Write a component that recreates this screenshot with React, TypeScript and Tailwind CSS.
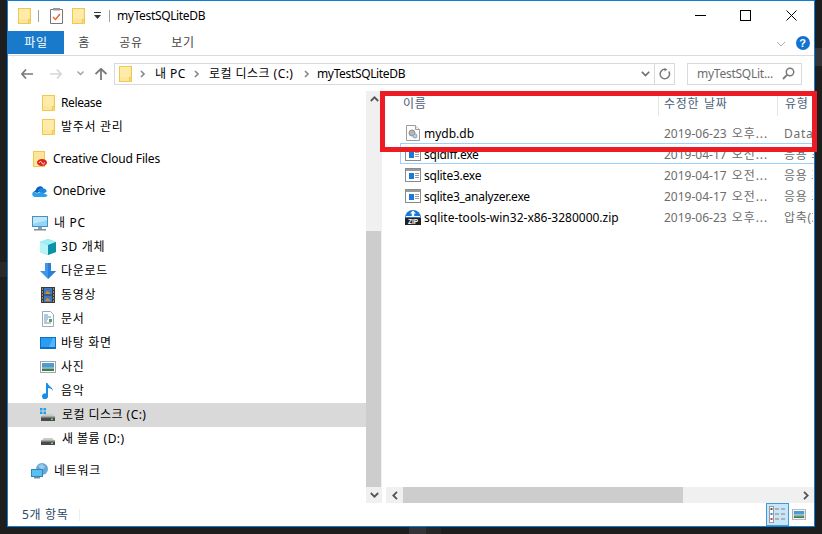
import React from "react";

const KR = "tracking-[0.7px]";
const KRP = "tracking-[0.45px]";

const Folder = ({ className = "" }: { className?: string }) => (
  <svg width="13" height="16" viewBox="0 0 13 16" className={`shrink-0 ${className}`}>
    <rect x="0.5" y="0.5" width="12" height="15" fill="#fde59a" stroke="#eec850" />
    <path d="M1 1h10v10H1z" fill="#ffeeb5" opacity="0.6" />
    <path d="M10.5 15.5v-4h2v4" fill="#fbdc7c" stroke="#eec850" />
  </svg>
);

const Chevron = ({ className = "" }: { className?: string }) => (
  <svg width="6" height="8" viewBox="0 0 6 8" className={`shrink-0 ${className}`}>
    <path d="M1 1l3 3-3 3" fill="none" stroke="#8a8a8a" strokeWidth="1.7" />
  </svg>
);

const ExeIcon = () => (
  <svg width="16" height="14" viewBox="0 0 16 14" className="shrink-0">
    <rect x="0.5" y="0.5" width="15" height="13" fill="#fff" stroke="#8b8b8b" />
    <rect x="1" y="1" width="14" height="2" fill="#9a9a9a" />
    <rect x="4" y="5" width="5" height="6" fill="#1979d8" />
    <path d="M10 5.5h4M10 7.5h4M10 9.5h4" stroke="#9a9a9a" />
  </svg>
);

const DbIcon = () => (
  <svg width="14" height="16" viewBox="0 0 14 16" className="shrink-0">
    <path d="M0.5 0.5h9l4 4v11h-13z" fill="#fdfdfd" stroke="#9c9c9c" />
    <path d="M9.5 0.5v4h4" fill="#eee" stroke="#9c9c9c" />
    <circle cx="6" cy="8" r="3" fill="#b5b5b5" stroke="#8d8d8d" />
    <circle cx="9" cy="11" r="2" fill="#b9d3ea" stroke="#8aa0b5" />
  </svg>
);

const ZipIcon = () => (
  <svg width="16" height="16" viewBox="0 0 16 16" className="shrink-0">
    <path d="M0 9a8 8 0 0 1 16 0z" fill="#1b78d0" />
    <path d="M8 1.5l3 3H9.2V7H6.8V4.5H5z" fill="#fff" />
    <path d="M1 7.5h14" stroke="#fff" />
    <rect x="0" y="9" width="16" height="7" fill="#222" />
    <text x="8" y="15" textAnchor="middle" fontSize="6.5" fontWeight="700" fill="#fff" fontFamily="Liberation Sans">ZIP</text>
  </svg>
);

const CloudFiles = () => (
  <svg width="14" height="16" viewBox="0 0 14 16" className="shrink-0">
    <rect x="0.5" y="0.5" width="11" height="15" fill="#fde59a" stroke="#eec850" />
    <ellipse cx="9" cy="11.5" rx="5" ry="3.5" fill="#e2231a" />
    <path d="M6 12c1-2 2-2 3 0s2 1 2.500-.5" stroke="#fff" fill="none" />
  </svg>
);

const OneDrive = () => (
  <svg width="16" height="11" viewBox="0 0 16 11" className="shrink-0">
    <path d="M4 4a4 4 0 0 1 7.500-1.500L8 5 5.500 7 2 6a3 3 0 0 1 2-2z" fill="#0a5cb8" />
    <path d="M6 5a3.500 3.500 0 0 1 5.500-2.500A3 3 0 0 1 14.500 6L10 8z" fill="#1a87dc" />
    <path d="M1.500 5.500a3 3 0 0 0-.5 4.500q1 1 2 1h10q2 0 2.500-2L9 6 5 7.500z" fill="#2a9fea" />
  </svg>
);

const PcIcon = () => (
  <svg width="16" height="15" viewBox="0 0 16 15" className="shrink-0">
    <rect x="0.500" y="0.500" width="15" height="10" fill="#8fd6f8" stroke="#4a8fc0" />
    <path d="M1 1h14v3L1 8z" fill="#bfe9fb" />
    <rect x="6" y="11" width="4" height="2" fill="#8aa0b0" />
    <rect x="2" y="13" width="12" height="1.500" fill="#7d8f9c" />
  </svg>
);

const Cube = () => (
  <svg width="16" height="16" viewBox="0 0 16 16" className="shrink-0">
    <path d="M8 0l8 3v10l-8 3-8-3V3z" fill="#4fd0e0" />
    <path d="M0 3l8 3 8-3-8-3z" fill="#9ff0f4" />
    <path d="M8 6v10l8-3V3z" fill="#0f8fa8" />
    <path d="M0 3l8 3v10l-8-3z" fill="#b8f3f6" />
  </svg>
);

const Down = () => (
  <svg width="16" height="16" viewBox="0 0 16 16" className="shrink-0">
    <path d="M5 0h6v8h5l-8 8-8-8h5z" fill="#3f96e8" />
    <path d="M8 0h3v8h5l-8 8z" fill="#2a7fd6" />
  </svg>
);

const Film = () => (
  <svg width="14" height="16" viewBox="0 0 14 16" className="shrink-0">
    <rect width="14" height="16" fill="#3b3b3b" />
    <rect x="3" y="1" width="8" height="6.500" fill="#3f78c0" />
    <rect x="3" y="8.500" width="8" height="6.500" fill="#3f78c0" />
    <path d="M4 7l2-3 2 1 2 2zM4 14l2-3 2 1 2 2z" fill="#d88a28" />
    <path d="M1 2h1M1 5h1M1 8h1M1 11h1M1 14h1M12 2h1M12 5h1M12 8h1M12 11h1M12 14h1" stroke="#ddd" />
  </svg>
);

const Doc = () => (
  <svg width="12" height="16" viewBox="0 0 12 16" className="shrink-0">
    <path d="M0.500 0.500h8l3 3v12h-11z" fill="#fff" stroke="#a0a8b0" />
    <path d="M2 4h4M2 6h7" stroke="#4c9bd8" />
    <path d="M2 8h4M2 10h3M2 12h7" stroke="#7a8d9a" />
    <rect x="7" y="8" width="3" height="3" fill="#50a070" />
  </svg>
);

const Desktop = () => (
  <svg width="16" height="12" viewBox="0 0 16 12" className="shrink-0">
    <rect width="16" height="12" fill="#0d6fc4" />
    <rect x="1" y="1" width="14" height="9" fill="#2a9df2" />
    <path d="M9 10l4-9h2v9z" fill="#55b6f6" />
  </svg>
);

const Picture = ({ w = 16, h = 12 }: { w?: number; h?: number }) => (
  <svg width={w} height={h} viewBox="0 0 16 12" className="shrink-0">
    <rect x="0.500" y="0.500" width="15" height="11" fill="#fff" stroke="#a4a4a4" />
    <rect x="2" y="2" width="12" height="4" fill="#4a9bd8" />
    <rect x="2" y="6" width="12" height="2" fill="#8fb59c" />
    <rect x="2" y="8" width="12" height="2" fill="#3c7a5c" />
  </svg>
);

const Music = () => (
  <svg width="12" height="16" viewBox="0 0 12 16" className="shrink-0">
    <path d="M4 0h1.500c.5 3 5.500 4 5.500 8-1-2-3-3-5-3v8a3 3 0 1 1-2-2.500z" fill="#1a8ce6" />
  </svg>
);

const Drive = ({ win = false }: { win?: boolean }) => (
  <svg width="16" height="16" viewBox="0 0 16 16" className="shrink-0">
    {win && (
      <g fill="#25a0e8">
        <rect x="0" y="1" width="2.500" height="2.500" />
        <rect x="3.500" y="1" width="2.500" height="2.500" />
        <rect x="0" y="4.500" width="2.500" height="2.500" />
        <rect x="3.500" y="4.500" width="2.500" height="2.500" />
      </g>
    )}
    <path d="M2 9l2-2h8l2 2z" fill="#c8c8c8" />
    <rect x="1" y="9" width="14" height="5" fill="#4a4a4a" />
    <rect x="1" y="9" width="14" height="1.500" fill="#a8a8a8" />
    <rect x="11" y="11.500" width="2" height="1.500" fill="#6fe06f" />
  </svg>
);

const Network = () => (
  <svg width="18" height="16" viewBox="0 0 18 16" className="shrink-0">
    <circle cx="11" cy="6" r="6" fill="#6aa7d8" />
    <path d="M7 3l4-2 3 3-3 3z" fill="#9fcbe9" />
    <rect x="0.500" y="6.500" width="11" height="7" fill="#58bff2" stroke="#2f86bb" />
    <rect x="3" y="14" width="6" height="1.500" fill="#7d8f9c" />
  </svg>
);

const Row = ({ icon, label, indent, selected, text = "" }: { icon: React.ReactNode; label: string; indent: boolean; selected?: boolean; text?: string }) => (
  <div className={`flex h-6 items-center ${selected ? "bg-[#d9d9d9]" : ""}`}>
    <div className={`flex items-center justify-center w-[16px] ${indent ? "ml-[32px]" : "ml-[24px]"}`}>{icon}</div>
    <span className={`ml-[5px] text-black whitespace-nowrap ${text}`}>{label}</span>
  </div>
);

const files = [
  { icon: <DbIcon />, name: "mydb.db", date: "2019-06-23", ampm: "오후...", type: "Data", track: "" },
  { icon: <ExeIcon />, name: "sqldiff.exe", date: "2019-04-17", ampm: "오전...", type: "응용 프로그램", focus: true, track: "tracking-[-0.25px]" },
  { icon: <ExeIcon />, name: "sqlite3.exe", date: "2019-04-17", ampm: "오전...", type: "응용 프로그램", track: "tracking-[-0.25px]" },
  { icon: <ExeIcon />, name: "sqlite3_analyzer.exe", date: "2019-04-17", ampm: "오전...", type: "응용 프로그램", track: "tracking-[-0.25px]" },
  { icon: <ZipIcon />, name: "sqlite-tools-win32-x86-3280000.zip", date: "2019-06-23", ampm: "오후...", type: "압축(ZIP)", track: "" },
];

export default function App() {
  return (
    <div className="relative w-[822px] h-[534px] overflow-hidden bg-[#1e1e1e] pl-[7px] text-[12px] leading-[16px] font-['Noto_Sans','Noto_Sans_CJK_KR',sans-serif]">
      {/* stray desktop bits behind the window */}
      <div className="absolute left-0 top-[262px] w-[7px] h-[15px] bg-[#2a2a2a]" />
      <div className="absolute left-[815px] top-[48px] w-[7px] h-[18px] bg-[#333338]" />
      <div className="absolute left-[409px] top-[527px] w-[17px] h-[7px] bg-[#333338]" />
      <div className="absolute left-[426px] top-[527px] w-[15px] h-[7px] bg-[#262626]" />

      <div className="flex flex-col w-[808px] h-[527px] border border-[#0f7fd4] bg-white">
        {/* title bar */}
        <div className="flex h-[30px] items-center shrink-0">
          <Folder className="ml-[10px]" />
          <div className="ml-[7px] w-px h-[12px] bg-[#a0a0a0]" />
          <svg width="13" height="16" viewBox="0 0 13 16" className="ml-[11px] shrink-0">
            <path d="M0.500 1.500h12v14h-12z" fill="#fff" stroke="#777" />
            <rect x="3" y="0" width="7" height="2.500" fill="#999" />
            <path d="M3 9l2.500 2.500L10 6" fill="none" stroke="#e8622a" strokeWidth="1.400" />
          </svg>
          <Folder className="ml-[9px]" />
          <svg width="7" height="8" viewBox="0 0 7 8" className="ml-[9px] shrink-0">
            <path d="M0 0h7v1H0zM0 3h7L3.500 7z" fill="#333" />
          </svg>
          <div className="ml-[8px] w-px h-[12px] bg-[#a0a0a0]" />
          <span className="ml-[7px] text-black tracking-[-0.35px]">myTestSQLiteDB</span>
          <div className="flex-1" />
          <svg width="11" height="11" viewBox="0 0 11 11" className="mr-[34px] mb-[2px] shrink-0">
            <path d="M0 5.500h11" stroke="#000" />
          </svg>
          <svg width="11" height="11" viewBox="0 0 11 11" className="mr-[35px] mb-[2px] shrink-0">
            <rect x="0.500" y="0.500" width="10" height="10" fill="none" stroke="#000" />
          </svg>
          <svg width="11" height="11" viewBox="0 0 11 11" className="mr-[17px] mb-[2px] shrink-0">
            <path d="M0.500 0.500l10 10M10.500 0.500l-10 10" stroke="#000" />
          </svg>
        </div>

        {/* ribbon tabs */}
        <div className={`flex h-[25px] shrink-0 border-b border-[#dadada] text-[#444] ${KR}`}>
          <div className="flex w-[56px] h-[23px] items-center justify-center bg-[#1979ca] text-white">파일</div>
          <div className="flex w-[40px] h-[23px] items-center justify-center">홈</div>
          <div className="flex w-[54px] h-[23px] items-center justify-center">공유</div>
          <div className="flex w-[50px] h-[23px] items-center justify-center">보기</div>
          <div className="flex-1" />
          <svg width="10" height="6" viewBox="0 0 10 6" className="mt-[10px] mr-[10px] shrink-0">
            <path d="M1 1l4 4 4-4" fill="none" stroke="#a8a8a8" />
          </svg>
          <div className="mt-[5px] mr-[4px] flex w-[14px] h-[14px] items-center justify-center rounded-full bg-[#1173cf] text-white font-bold text-[11px] leading-none font-['Liberation_Sans',sans-serif]">?</div>
        </div>

        {/* address row */}
        <div className="flex h-[35px] shrink-0 items-center">
          <svg width="12" height="10" viewBox="0 0 12 10" className="ml-[13px] shrink-0">
            <path d="M5 0.500L1 5l4 4.500M1 5h11" fill="none" stroke="#7a7a7a" strokeWidth="1.700" />
          </svg>
          <svg width="12" height="10" viewBox="0 0 12 10" className="ml-[17px] shrink-0">
            <path d="M7 0.500L11 5l-4 4.500M11 5H0" fill="none" stroke="#d6d6d6" strokeWidth="1.700" />
          </svg>
          <svg width="7" height="5" viewBox="0 0 7 5" className="ml-[15px] shrink-0">
            <path d="M0.500 0.500L3.500 3.500l3-3" fill="none" stroke="#a0a0a0" strokeWidth="1.400" />
          </svg>
          <svg width="12" height="12" viewBox="0 0 12 12" className="ml-[11px] shrink-0">
            <path d="M0.500 6L6 0.800 11.500 6M6 1v11" fill="none" stroke="#7a7a7a" strokeWidth="1.800" />
          </svg>
          <div className="ml-[7px] flex w-[561px] h-[22px] items-center border border-[#d9d9d9] text-black">
            <Folder className="ml-[4px]" />
            <Chevron className="ml-[8px]" />
            <span className={`ml-[9px] w-[39px] whitespace-nowrap ${KRP}`}>내 PC</span>
            <Chevron />
            <span className={`ml-[9px] w-[95px] whitespace-nowrap ${KRP}`}>로컬 디스크 (C:)</span>
            <Chevron />
            <span className="ml-[7px] tracking-[-0.35px]">myTestSQLiteDB</span>
            <div className="flex-1" />
            <svg width="9" height="6" viewBox="0 0 9 6" className="mr-[4px] shrink-0">
              <path d="M0.800 0.800L4.500 4.500 8.200 0.800" fill="none" stroke="#6a6a6a" strokeWidth="1.600" />
            </svg>
            <div className="flex w-[20px] h-full items-center justify-center border-l border-[#d9d9d9]">
              <svg width="12" height="12" viewBox="0 0 12 12">
                <path d="M9.800 3.500A4.700 4.700 0 1 1 6 1.300" fill="none" stroke="#7a7a7a" strokeWidth="1.500" />
                <path d="M5.500 0l3 1.500-3 2z" fill="#7a7a7a" />
              </svg>
            </div>
          </div>
          <div className="ml-[12px] flex w-[115px] h-[22px] items-center border border-[#d9d9d9] text-[#6d6d6d]">
            <span className="ml-[9px] tracking-[-0.25px]">myTestSQLit...</span>
            <div className="flex-1" />
            <svg width="13" height="13" viewBox="0 0 13 13" className="mr-[6px] shrink-0">
              <circle cx="8" cy="5" r="3.700" fill="none" stroke="#7a7a7a" strokeWidth="1.500" />
              <path d="M5.300 7.700L1 12" stroke="#7a7a7a" strokeWidth="1.800" />
            </svg>
          </div>
        </div>

        {/* body */}
        <div className="flex flex-1 min-h-0">
          {/* nav pane */}
          <div className="w-[358px] shrink-0 overflow-hidden">
            <div className="flex flex-col">
              <Row indent icon={<Folder />} label="Release" text="tracking-[-0.4px]" />
              <Row indent icon={<Folder />} label="발주서 관리" text={KR} />
              <div className="h-2" />
              <Row indent={false} icon={<CloudFiles />} label="Creative Cloud Files" text="tracking-[-0.15px]" />
              <div className="h-2" />
              <Row indent={false} icon={<OneDrive />} label="OneDrive" text="tracking-[-0.1px]" />
              <div className="h-2" />
              <Row indent={false} icon={<PcIcon />} label="내 PC" text={`${KR} pl-px`} />
              <Row indent icon={<Cube />} label="3D 개체" text={KR} />
              <Row indent icon={<Down />} label="다운로드" text={KR} />
              <Row indent icon={<Film />} label="동영상" text={KR} />
              <Row indent icon={<Doc />} label="문서" text={KR} />
              <Row indent icon={<Desktop />} label="바탕 화면" text={KR} />
              <Row indent icon={<Picture />} label="사진" text={KR} />
              <Row indent icon={<Music />} label="음악" text={KR} />
              <Row indent selected icon={<Drive win />} label="로컬 디스크 (C:)" text={`${KRP} pl-px`} />
              <Row indent icon={<Drive />} label="새 볼륨 (D:)" text={`${KRP} pl-px`} />
              <div className="h-2" />
              <Row indent={false} icon={<Network />} label="네트워크" text={`${KR} pl-px`} />
            </div>
          </div>

          {/* nav scrollbar */}
          <div className="flex w-[16px] shrink-0 flex-col bg-[#f0f0f0]">
            <div className="flex h-[16px] shrink-0 items-center justify-center">
              <svg width="9" height="6" viewBox="0 0 9 6">
                <path d="M0.800 5L4.500 1.300 8.200 5" fill="none" stroke="#555" strokeWidth="1.800" />
              </svg>
            </div>
            <div className="h-[124px] shrink-0" />
            <div className="flex-1 mr-[1px] bg-[#cdcdcd]" />
            <div className="flex h-[16px] shrink-0 items-center justify-center">
              <svg width="9" height="6" viewBox="0 0 9 6">
                <path d="M0.800 1L4.500 4.700 8.200 1" fill="none" stroke="#555" strokeWidth="1.800" />
              </svg>
            </div>
          </div>

          {/* list */}
          <div className="flex min-w-0 flex-1 flex-col pl-[4px]">
            <div className="flex min-h-0 flex-1 flex-col overflow-hidden">
              <div className={`flex h-[25px] shrink-0 pt-[4px] text-[#4c607a] ${KR}`}>
                <div className="w-[272px] shrink-0 pl-[17px] pt-[1px]">이름</div>
                <div className="w-[119px] shrink-0 border-l border-[#e5e5e5] pl-[5px] pt-[1px] [word-spacing:1px]">수정한 날짜</div>
                <div className="flex-1 border-l border-[#e5e5e5] pl-[7px] pt-[1px]">유형</div>
              </div>
              <div className="h-[6px] shrink-0" />
              {files.map((f) => (
                <div
                  key={f.name}
                  className={`flex h-[21px] shrink-0 items-center overflow-hidden whitespace-nowrap ml-[14px] border ${f.focus ? "border-r-0 border-[#99d1ff]" : "border-transparent"}`}
                >
                  <div className="flex w-[22px] shrink-0 justify-center pl-[1px]">{f.icon}</div>
                  <div className={`w-[241px] shrink-0 pl-[1px] pt-[2px] text-black ${f.track}`}>{f.name}</div>
                  <div className="w-[120px] shrink-0 pt-[2px] text-[#6d6d6d] [word-spacing:2px]">
                    {f.date} <span className="tracking-[0.9px]">{f.ampm}</span>
                  </div>
                  <div className={`shrink-0 pt-[2px] text-[#6d6d6d] ${KR}`}>{f.type}</div>
                </div>
              ))}
            </div>
            {/* horizontal scrollbar */}
            <div className="flex h-[16px] shrink-0 bg-[#f0f0f0]">
              <div className="flex w-[17px] shrink-0 items-center justify-center">
                <svg width="6" height="9" viewBox="0 0 6 9">
                  <path d="M5 0.800L1.300 4.500 5 8.200" fill="none" stroke="#555" strokeWidth="1.800" />
                </svg>
              </div>
              <div className="w-[280px] shrink-0 bg-[#cdcdcd]" />
              <div className="flex-1" />
              <div className="flex w-[16px] shrink-0 items-center justify-center">
                <svg width="6" height="9" viewBox="0 0 6 9">
                  <path d="M1 0.800L4.700 4.500 1 8.200" fill="none" stroke="#555" strokeWidth="1.800" />
                </svg>
              </div>
            </div>
          </div>
        </div>

        {/* status bar */}
        <div className="flex h-[23px] shrink-0 items-center text-[#2a4a6a]">
          <span className={`ml-[14px] ${KR}`}>5개 항목</span>
          <div className="ml-[10px] w-px h-[12px] bg-[#eeeeee]" />
          <div className="flex-1" />
          <div className="flex w-[23px] h-[23px] items-center justify-center border border-[#3a9ddc] bg-[#c9e6f8]">
            <svg width="17" height="17" viewBox="0 0 17 17">
              <rect x="0.500" y="0.500" width="4" height="16" fill="#fff" stroke="#9a9a9a" />
              <rect x="1.500" y="2" width="2" height="2" fill="#555" />
              <rect x="1.500" y="7" width="2" height="2" fill="#3a80d8" />
              <rect x="1.500" y="12" width="2" height="2" fill="#d83a3a" />
              <path d="M6 3h4M12 3h4M6 8h4M12 8h4M6 13h4M12 13h4" stroke="#808080" />
            </svg>
          </div>
          <div className="ml-[3px] mr-[8px] flex w-[14px] items-center justify-center">
            <Picture w={14} h={11} />
          </div>
        </div>
      </div>

      {/* red annotation box */}
      <div className="absolute left-[380px] top-[91px] w-[437px] h-[61px] border-[5px] border-[#ed1c24]" />
    </div>
  );
}
